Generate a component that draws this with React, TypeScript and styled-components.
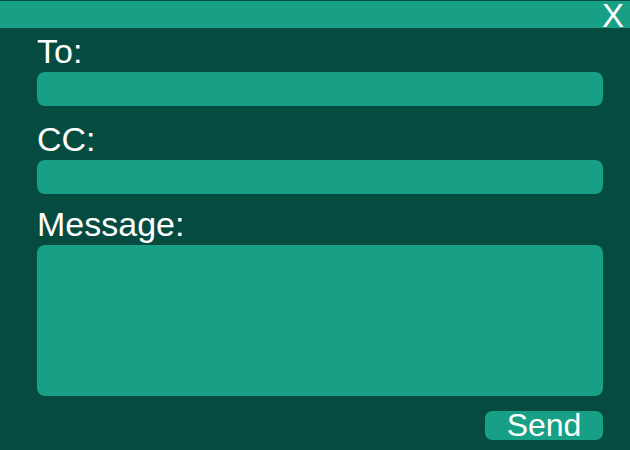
import React from "react";
import styled, { createGlobalStyle } from "styled-components";

const Global = createGlobalStyle`
  html, body { margin: 0; padding: 0; background: #064b3f; }
  body { font-family: "Liberation Sans", Arial, sans-serif; }
`;

const Window = styled.div`
  width: 630px;
  height: 450px;
  background: #064b3f;
  display: flex;
  flex-direction: column;
  overflow: hidden;
`;

const TitleBar = styled.div`
  margin-top: 1px;
  height: 27px;
  background: #17a085;
  display: flex;
  justify-content: flex-end;
  align-items: flex-start;
  padding-right: 6px;
  overflow: visible;
`;

const Close = styled.span`
  display: block;
  color: #ffffff;
  font-family: "Liberation Sans", Arial, sans-serif;
  font-size: 33px;
  line-height: 29px;
  height: 27px;
  overflow: visible;
  cursor: pointer;
`;

const Form = styled.div`
  display: flex;
  flex-direction: column;
  padding: 0 27px 0 37px;
`;

const Label = styled.label<{ $top: number }>`
  display: block;
  color: #ffffff;
  font-size: 34px;
  line-height: 38px;
  margin-top: ${(p) => p.$top}px;
  margin-bottom: 2px;
`;

const Field = styled.div<{ $h: number }>`
  height: ${(p) => p.$h}px;
  background: #17a085;
  border-radius: 8px;
`;

const Footer = styled.div`
  display: flex;
  justify-content: flex-end;
  margin-top: 15px;
`;

const SendButton = styled.button`
  width: 118px;
  height: 29px;
  border: none;
  border-radius: 7px;
  background: #17a085;
  color: #ffffff;
  font-family: "Liberation Sans", Arial, sans-serif;
  font-size: 32px;
  line-height: 29px;
  padding: 0;
  cursor: pointer;
`;

export default function App() {
  return (
    <>
      <Global />
      <Window>
        <TitleBar>
          <Close>X</Close>
        </TitleBar>
        <Form>
          <Label $top={4}>To:</Label>
          <Field $h={34} />
          <Label $top={14}>CC:</Label>
          <Field $h={34} />
          <Label $top={11}>Message:</Label>
          <Field $h={151} />
          <Footer>
            <SendButton>Send</SendButton>
          </Footer>
        </Form>
      </Window>
    </>
  );
}
